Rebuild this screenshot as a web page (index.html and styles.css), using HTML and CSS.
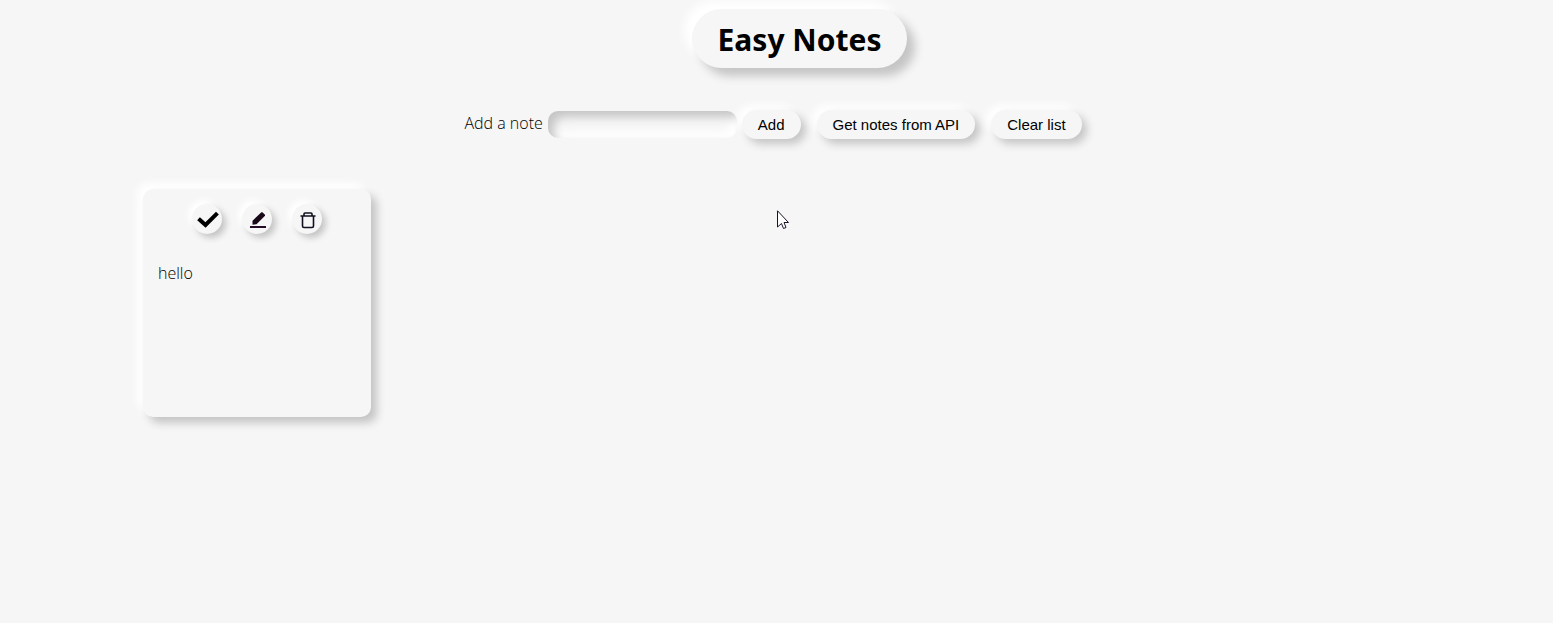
FILE: index.html
```html
<!DOCTYPE html>
<html lang="en">
<head>
<meta charset="utf-8">
<title>Easy Notes</title>
<link rel="stylesheet" href="styles.css">
</head>
<body>
<header class="header"><h1 class="title">Easy Notes</h1></header>
<main>
  <form class="note-form">
    <label class="label" for="note">Add a note</label>
    <input class="note-input" id="note" type="text">
    <div class="actions">
      <button class="button" type="button">Add</button>
      <button class="button" type="button">Get notes from API</button>
      <button class="button" type="button">Clear list</button>
    </div>
  </form>
  <section class="notes">
    <article class="note">
      <div class="note-actions">
        <button class="icon-button" type="button" aria-label="Done">
          <svg class="icon" viewBox="0 0 30 30"><path d="M8 16L13.500 21L24 10.500" fill="none" stroke="#000" stroke-width="4" stroke-linecap="square" stroke-linejoin="miter"/></svg>
        </button>
        <button class="icon-button" type="button" aria-label="Edit">
          <svg class="icon" viewBox="0 0 30 30"><path d="M8 22h16v2H8z" fill="#240a24"/><path d="M10.500 20.800V16.800L19.400 8.200H20.400L23 10.800V11.800L14.500 20.200z" fill="#180818"/></svg>
        </button>
        <button class="icon-button" type="button" aria-label="Delete">
          <svg class="icon" viewBox="0 0 30 30"><path d="M8.500 12H23.500M12 12V10Q12 9 13 9H19Q20 9 20 10V12M10.500 12V22Q10.500 23.500 12 23.500H20Q21.500 23.500 21.500 22V12" fill="none" stroke="#101022" stroke-width="1.600"/></svg>
        </button>
      </div>
      <p class="note-text">hello</p>
    </article>
  </section>
</main>
<svg class="cursor" viewBox="0 0 14 20" aria-hidden="true"><path d="M1.500 .8V17L5.500 13.500L7.500 18.500L10 17.500L8 12.500H12.500z" fill="#fff" stroke="#1c1228"/></svg>
</body>
</html>
```
FILE: styles.css
```css
* {
  box-sizing: border-box;
}

body {
  margin: 0;
  background: #f6f6f6;
  color: #000;
  font-family: "Segoe UI", "Open Sans", "Noto Sans", sans-serif;
  font-size: 16px;
  font-weight: 300;
}

.header {
  display: flex;
  justify-content: center;
  padding: 9px 0 0 46px;
}

.title {
  margin: 0;
  padding: 9px 26px 7px;
  border-radius: 30px;
  box-shadow: 8px 8px 10px #c5c5c5, -8px -8px 10px #fff;
  font-family: "Segoe UI", "Noto Sans", sans-serif;
  font-size: 30px;
  font-weight: 700;
  line-height: 43px;
}

.note-form {
  display: flex;
  justify-content: center;
  align-items: center;
  padding: 42px 7px 0 0;
}

.label {
  padding: 0 5px 3px 0;
  line-height: 22px;
}

.note-input {
  width: 189px;
  height: 27px;
  margin-right: 5px;
  padding: 4px 12px;
  border: 0;
  border-radius: 10px;
  background: #f6f6f6;
  box-shadow: inset 6px 6px 10px #c5c5c5, inset -6px -6px 10px #fff;
  font-size: 15px;
}

.actions {
  display: flex;
  gap: 16px;
}

.button {
  height: 29px;
  padding: 0 16px;
  border: 0;
  border-radius: 15px;
  background: #f6f6f6;
  box-shadow: 5px 5px 8px #c5c5c5, -5px -5px 8px #fff;
  color: #000;
  font-family: "Liberation Sans", Arial, sans-serif;
  font-size: 15px;
}

.notes {
  display: grid;
  grid-template-columns: repeat(auto-fill, 228px);
  gap: 30px;
  padding: 50px 143px;
}

.note {
  min-height: 228px;
  padding: 15px;
  border-radius: 10px;
  box-shadow: 6px 6px 8px #c5c5c5, -6px -6px 8px #fff;
}

.note-actions {
  display: flex;
  justify-content: center;
  gap: 20px;
}

.icon-button {
  width: 30px;
  height: 30px;
  padding: 0;
  border: 0;
  border-radius: 50%;
  background: #f6f6f6;
  box-shadow: 4px 4px 6px #c5c5c5, -4px -4px 6px #fff;
}

.icon {
  display: block;
  width: 30px;
  height: 30px;
}

.note-text {
  margin: 28px 0 0;
  line-height: 22px;
}

.cursor {
  position: absolute;
  top: 210px;
  left: 776px;
  width: 14px;
  height: 20px;
  pointer-events: none;
}
```
